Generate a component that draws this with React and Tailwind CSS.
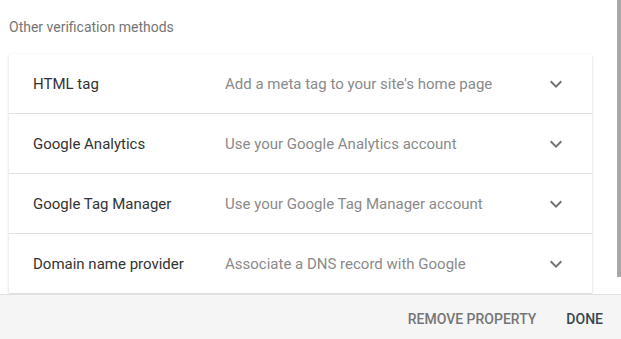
import React from "react";

const methods = [
  { title: "HTML tag", desc: "Add a meta tag to your site's home page" },
  { title: "Google Analytics", desc: "Use your Google Analytics account" },
  { title: "Google Tag Manager", desc: "Use your Google Tag Manager account" },
  { title: "Domain name provider", desc: "Associate a DNS record with Google" },
];

function Chevron() {
  return (
    <svg width="24" height="24" viewBox="0 0 24 24" className="text-[#757575]">
      <path
        fill="currentColor"
        d="M7.41 8.59L12 13.17l4.59-4.58L18 10l-6 6-6-6 1.41-1.41z"
      />
    </svg>
  );
}

export default function App() {
  return (
    <div
      className="w-[621px] h-[339px] flex flex-col bg-white overflow-hidden"
      style={{ fontFamily: "Roboto, 'Liberation Sans', sans-serif" }}
    >
      <div className="h-[294px] flex overflow-hidden">
        <div className="flex-1 pl-[9px] pr-[25px]">
          <p className="pt-[17px] h-[54px] text-[14px] text-[#757575]">
            Other verification methods
          </p>
          <div className="bg-white rounded-[2px] shadow-[0_1px_3px_rgba(0,0,0,0.18)]">
            {methods.map((m) => (
              <div
                key={m.title}
                className="h-[60px] pt-[2px] flex items-center border-b border-[#e0e0e0] text-[15px] font-normal"
              >
                <span className="w-[216px] pl-[24px] text-[#333333]">{m.title}</span>
                <span className="flex-1 text-[#8a8a8a]">{m.desc}</span>
                <span className="w-[24px] mr-[24px] -mt-[2px] flex items-center justify-center">
                  <Chevron />
                </span>
              </div>
            ))}
          </div>
        </div>
        <div className="w-[4px] h-full">
          <div className="h-[277px] bg-[#a8a8a8]"></div>
        </div>
      </div>
      <div className="flex-1 bg-[#f5f5f5] border-t border-[#e0e0e0] flex items-center justify-end pt-[5px] pr-[18px] gap-[30px] text-[14px] font-medium">
        <button className="uppercase text-[#757575]">Remove property</button>
        <button className="uppercase text-[#37474f]">Done</button>
      </div>
    </div>
  );
}
